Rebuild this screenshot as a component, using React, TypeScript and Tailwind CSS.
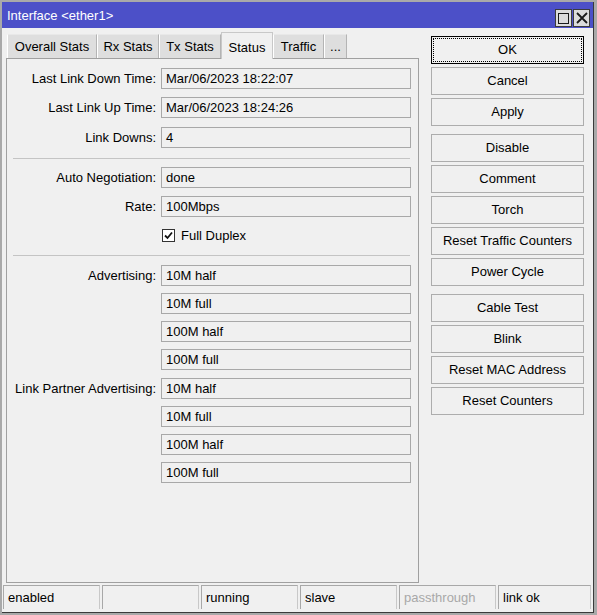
import React from "react";

const tabs = [
  { name: "Overall Stats", w: "w-[90px]" },
  { name: "Rx Stats", w: "w-[62px]" },
  { name: "Tx Stats", w: "w-[62px]" },
  { name: "Status", w: "w-[52px]", active: true },
  { name: "Traffic", w: "w-[51px]" },
  { name: "...", w: "w-[23px]" },
];

const buttonGroups = [
  ["OK", "Cancel", "Apply"],
  ["Disable", "Comment", "Torch", "Reset Traffic Counters", "Power Cycle"],
  ["Cable Test", "Blink", "Reset MAC Address", "Reset Counters"],
];

const statusCells = [
  { text: "enabled" },
  { text: "" },
  { text: "running" },
  { text: "slave" },
  { text: "passthrough", dim: true },
  { text: "link ok" },
];

function Field({ label, value, pitch }: { label?: string; value: string; pitch?: string }) {
  return (
    <div className={`flex items-center h-[21px] ${pitch ?? ""}`}>
      <div className="w-[150px] text-right pr-[1px] whitespace-nowrap">{label ? `${label}:` : ""}</div>
      <div className="ml-[4px] w-[250px] h-[21px] border border-[#a8a8a8] pl-[4px] flex items-center leading-none">
        {value}
      </div>
    </div>
  );
}

function Separator({ className }: { className: string }) {
  return <div className={`ml-[6px] w-[397px] h-px bg-[#c4c4c4] ${className}`} />;
}

function WinButton({ kind }: { kind: "max" | "close" }) {
  return (
    <div className="w-[17px] h-[18px] bg-[#dcdcdc] border border-[#3c3c3c] flex items-center justify-center">
      {kind === "max" ? (
        <div className="w-[11px] h-[11px] border-[1.5px] border-[#1a1a1a]" />
      ) : (
        <svg width="12" height="12" viewBox="0 0 12 12">
          <path d="M1 1 L11 11 M11 1 L1 11" stroke="#1a1a1a" strokeWidth="1.8" fill="none" />
        </svg>
      )}
    </div>
  );
}

export default function App() {
  return (
    <div className="w-[597px] h-[615px] bg-[#a9a9a9] pt-[2px] pl-[2px] font-['Liberation_Sans',Arial,sans-serif] text-[13px] text-black">
      <div className="w-[592px] h-[611px] flex flex-col border-r border-b border-[#3a3a3a] bg-[#f0f0f0]">
        {/* Title bar */}
        <div className="h-[26px] bg-[#4c50c8] flex items-start pl-[5px] pr-[3px]">
          <span className="text-white mt-[6px] leading-[15px]">Interface &lt;ether1&gt;</span>
          <div className="ml-auto mt-[7px] flex gap-[1px]">
            <WinButton kind="max" />
            <WinButton kind="close" />
          </div>
        </div>

        <div className="flex">
          {/* Left column: tabs + panel */}
          <div className="w-[417px] pl-[4px] flex flex-col">
            <div className="h-[30px] flex items-end pl-[1px]">
              {tabs.map((t) =>
                t.active ? (
                  <div
                    key={t.name}
                    className={`${t.w} h-[27px] bg-[#f0f0f0] border border-b-0 border-[#c8c8c8] flex justify-center pt-[5px] -mb-px relative z-10`}
                  >
                    {t.name}
                  </div>
                ) : (
                  <div
                    key={t.name}
                    className={`${t.w} h-[24px] bg-[#dedede] border-l border-t border-l-white border-t-[#e8e8e8] border-r border-r-[#b4b4b4] flex items-center justify-center`}
                  >
                    {t.name}
                  </div>
                )
              )}
            </div>
            <div className="w-[413px] h-[525px] border border-[#a0a0a0] flex flex-col pt-[9px]">
              <Field label="Last Link Down Time" value="Mar/06/2023 18:22:07" />
              <Field label="Last Link Up Time" value="Mar/06/2023 18:24:26" pitch="mt-[8px]" />
              <Field label="Link Downs" value="4" pitch="mt-[9px]" />
              <Separator className="mt-[10px]" />
              <Field label="Auto Negotiation" value="done" pitch="mt-[8px]" />
              <Field label="Rate" value="100Mbps" pitch="mt-[8px]" />
              <div className="flex items-center h-[21px] mt-[8px]">
                <div className="ml-[155px] w-[13px] h-[13px] bg-white border border-[#333] flex items-center justify-center">
                  <svg width="9" height="9" viewBox="0 0 9 9">
                    <path d="M1 4.5 L3.5 7 L8 1.5" stroke="#111" strokeWidth="1.8" fill="none" />
                  </svg>
                </div>
                <span className="ml-[6px]">Full Duplex</span>
              </div>
              <Separator className="mt-[9px]" />
              <Field label="Advertising" value="10M half" pitch="mt-[9px]" />
              <Field value="10M full" pitch="mt-[7px]" />
              <Field value="100M half" pitch="mt-[7px]" />
              <Field value="100M full" pitch="mt-[7px]" />
              <Field label="Link Partner Advertising" value="10M half" pitch="mt-[8px]" />
              <Field value="10M full" pitch="mt-[7px]" />
              <Field value="100M half" pitch="mt-[7px]" />
              <Field value="100M full" pitch="mt-[7px]" />
            </div>
          </div>

          {/* Buttons */}
          <div className="ml-[12px] pt-[8px] w-[153px] flex flex-col gap-[8px]">
            {buttonGroups.map((group, gi) => (
              <div key={gi} className="flex flex-col gap-[3px]">
                {group.map((b) =>
                  b === "OK" ? (
                    <div key={b} className="h-[28px] border border-black p-px">
                      <div className="h-full border border-dotted border-black flex items-center justify-center">
                        {b}
                      </div>
                    </div>
                  ) : (
                    <div
                      key={b}
                      className="h-[28px] border border-[#adadad] flex items-center justify-center whitespace-nowrap"
                    >
                      {b}
                    </div>
                  )
                )}
              </div>
            ))}
          </div>
        </div>

        {/* Status bar */}
        <div className="mt-[2px] h-[24px] flex gap-[2px] pl-[1px] pr-[2px]">
          {statusCells.map((c, i) => (
            <div
              key={i}
              className={`${i === 5 ? "flex-1" : "w-[97px]"} h-full border-t border-l border-r border-t-[#a8a8a8] border-l-[#a8a8a8] border-r-[#c8c8c8] flex items-center pl-[4px] ${
                c.dim ? "text-[#a8a8a8]" : ""
              }`}
            >
              {c.text}
            </div>
          ))}
        </div>
      </div>
    </div>
  );
}
